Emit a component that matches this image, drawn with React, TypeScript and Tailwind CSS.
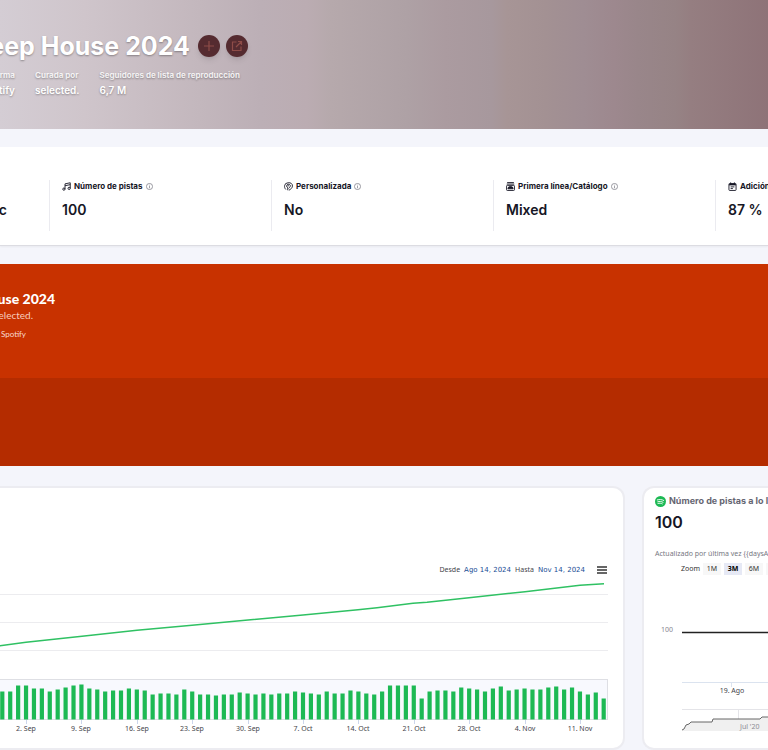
import type { ReactNode } from "react";

const BARS = [
  28, 28, 34, 34, 31, 31, 28, 30, 32, 34, 35, 31, 30, 28, 29, 29, 31, 30, 29, 25, 26, 26, 25, 30,
  28, 25, 25, 24, 25, 25, 27, 26, 25, 26, 25, 26, 26, 28, 27, 26, 25, 28, 26, 26, 29, 28, 26, 25,
  28, 34, 34, 34, 34, 21, 28, 29, 29, 28, 32, 31, 30, 28, 31, 33, 29, 30, 31, 30, 30, 32, 33, 30,
  32, 28, 25, 27, 21,
];

const LINE =
  "M-8 78.700L0 77.700L26 74.300L82 68.300L137 62.300L192 57.300L248 52L303 47L358 41.700L377 39.700L413 35.300L427 34.300L469 29.700L525 23.700L580 17.300L604 15.700";

const TICKS = [
  { x: 26, label: "2. Sep" },
  { x: 81, label: "9. Sep" },
  { x: 137, label: "16. Sep" },
  { x: 192, label: "23. Sep" },
  { x: 248, label: "30. Sep" },
  { x: 303, label: "7. Oct" },
  { x: 358, label: "14. Oct" },
  { x: 414, label: "21. Oct" },
  { x: 469, label: "28. Oct" },
  { x: 525, label: "4. Nov" },
  { x: 580, label: "11. Nov" },
];

function PlusIcon() {
  return (
    <svg viewBox="0 0 24 24" className="size-4" fill="none" stroke="currentColor" strokeWidth="1.8">
      <path d="M12 4.500v15M4.500 12h15" />
    </svg>
  );
}

function OpenIcon() {
  return (
    <svg viewBox="0 0 24 24" className="size-3" fill="none" stroke="currentColor" strokeWidth="2.4">
      <path d="M11 4H3v17h17v-8M14 3h7v7M21 3L10 14" />
    </svg>
  );
}

function InfoIcon() {
  return (
    <svg viewBox="0 0 24 24" className="size-[7px] text-[#74747e]" fill="none" stroke="currentColor" strokeWidth="2.4">
      <circle cx="12" cy="12" r="10.5" />
      <path d="M12 10.5V18M12 6v2.5" />
    </svg>
  );
}

function NotesIcon() {
  return (
    <svg viewBox="0 0 24 24" className="size-[9px]" fill="none" stroke="currentColor" strokeWidth="2.4">
      <path d="M8 19V5l14-3v15M8 10l14-3" />
      <circle cx="5" cy="19" r="3" />
      <circle cx="19" cy="17" r="3" />
    </svg>
  );
}

function HeadIcon() {
  return (
    <svg viewBox="0 0 24 24" className="size-[9px]" fill="none" stroke="currentColor" strokeWidth="2.4">
      <path d="M5 20C2 17 1 13 1.500 10A10 9 0 0 1 11 2c7-1 12 3 11.500 9-.5 5-4 8-9.500 11" />
      <path d="M10 22v-7M10 15c-4-1-4-8 1-9 5 0 7 3 5.500 6-1 2-3 4-4 5M10 10h3" />
    </svg>
  );
}

function CatalogIcon() {
  return (
    <svg viewBox="0 0 24 24" className="size-[9px]" fill="none" stroke="currentColor" strokeWidth="2.4">
      <path d="M3 1.500h18M2 5.500h20" />
      <rect x="1.5" y="9" width="21" height="13.5" rx="2" />
      <path d="M5 18a7 6 0 0 1 14 0z" fill="currentColor" />
    </svg>
  );
}

function CalendarIcon() {
  return (
    <svg viewBox="0 0 24 24" className="size-[9px]" fill="none" stroke="currentColor" strokeWidth="2.4">
      <rect x="2.5" y="4" width="19" height="18.5" rx="2" />
      <path d="M3 7h18" strokeWidth="4" />
      <path d="M7 1v4M17 1v4M7 13h10M7 17.500h6" />
    </svg>
  );
}

function SpotifyIcon() {
  return (
    <svg viewBox="0 0 24 24" className="size-[11px] shrink-0">
      <circle cx="12" cy="12" r="12" fill="#1db954" />
      <path
        d="M5 8.5c5-1.5 10-1 14 1.2M6 12.5c4-1.2 8-.8 11.500 1.200M6.500 16.200c3.500-1 6.500-.6 9.500 1"
        fill="none"
        stroke="#fff"
        strokeWidth="2"
        strokeLinecap="round"
      />
    </svg>
  );
}

function Meta({ label, value }: { label: string; value: string }) {
  return (
    <div>
      <dt className="text-[8px] leading-3 font-bold text-white/85">{label}</dt>
      <dd className="mt-[3px] text-[10px] leading-3 font-semibold">{value}</dd>
    </div>
  );
}

function Stat({ icon, label, value }: { icon: ReactNode; label: string; value: string }) {
  return (
    <div className="w-[222px] shrink-0 border-l border-[#ebebf0] pl-3">
      <div className="flex h-3 items-center gap-[3px] text-[8px] font-bold whitespace-nowrap">
        {icon}
        {label}
        <InfoIcon />
      </div>
      <div className="mt-[6px] text-[14px] leading-6 font-semibold">{value}</div>
    </div>
  );
}

function FollowersChart() {
  return (
    <svg viewBox="0 0 608 168" className="block h-[168px] w-[608px]" role="img" aria-label="Seguidores">
      <path d="M0 26.500H608M0 54.500H608M0 82.500H608" stroke="#ececef" />
      <rect x="-4" y="111.500" width="611.500" height="40" fill="#f8f9fe" stroke="#dedfe4" />
      {BARS.map((h, i) => (
        <rect key={i} x={0.2 + i * 7.913} y={151.5 - h} width="4.200" height={h} fill="#1db954" />
      ))}
      <path d={LINE} fill="none" stroke="#2fc163" strokeWidth="1.400" />
      {TICKS.map((t) => (
        <g key={t.label}>
          <path d={`M${t.x}.5 152v4`} stroke="#ccd6eb" />
          <text x={t.x} y="163" textAnchor="middle" fontSize="7" fill="#44444a">
            {t.label}
          </text>
        </g>
      ))}
    </svg>
  );
}

function TracksChart() {
  return (
    <svg viewBox="0 0 114 150" className="block h-[150px] w-[114px]" role="img" aria-label="Número de pistas">
      <text x="6" y="48" fontSize="7" fill="#85858e">100</text>
      <path d="M27 48.500H114" stroke="#222" strokeWidth="1.300" />
      <path d="M27 98.500H114M76.500 98v5" stroke="#dbe3ef" />
      <text x="77" y="109" textAnchor="middle" fontSize="7" fill="#44444a">19. Ago</text>
      <path d="M27 125.500H114M83.500 125v22" stroke="#e4e4e8" />
      <path d="M27 146L29 145L31 141L34 140L36 138H57L58 135H105L107 133H114V147H27Z" fill="#f0f0f0" />
      <path d="M27 146L29 145L31 141L34 140L36 138H57L58 135H105L107 133H114" fill="none" stroke="#666" />
      <text x="85" y="145" fontSize="7" fill="#8c8c94">Jul '20</text>
    </svg>
  );
}

export default function App() {
  return (
    <div className="min-h-screen overflow-hidden bg-[#f4f5fb] font-['Inter',sans-serif] text-[#161625]">
      <header className="h-[129px] bg-[linear-gradient(to_right,#d4cdd4_0%,#cfc5cb_11%,#c3b7bd_26%,#bcafb6_34%,#bbacb2_40%,#b6a9ac_43%,#aea1a5_53%,#ab9ba0_58%,#a7989d_64%,#a79596_66%,#a39193_71%,#9f8d93_76%,#9d888e_80%,#99868a_83%,#968385_88%,#957e81_90%,#8e7378_100%)] pt-8 text-white [text-shadow:0_1px_2px_#0005]">
        <div className="flex w-[248px] items-center justify-end gap-[6px]">
          <h1 className="mr-[2px] text-[25px] leading-7 font-bold whitespace-nowrap">Deep House 2024</h1>
          <button aria-label="Añadir" className="flex size-[22px] shrink-0 items-center justify-center rounded-full bg-[#552b30] text-[#8e4c48] shadow-md">
            <PlusIcon />
          </button>
          <button aria-label="Abrir" className="flex size-[22px] shrink-0 items-center justify-center rounded-full bg-[#552b30] text-[#8e4c48] shadow-md">
            <OpenIcon />
          </button>
        </div>
        <dl className="mt-[9px] flex gap-5 whitespace-nowrap">
          <div className="flex w-[15px] justify-end text-right">
            <Meta label="Plataforma" value="Spotify" />
          </div>
          <Meta label="Curada por" value="selected." />
          <Meta label="Seguidores de lista de reproducción" value="6,7 M" />
        </dl>
      </header>

      <main>
        <section className="mt-[18px] flex h-[99px] overflow-hidden border-b border-[#dcdce2] bg-white pt-[33px] pb-[14px] shadow-xs">
          <div className="flex w-[49px] shrink-0 justify-end pr-[42px]">
            <div className="mt-[18px] text-[14px] leading-6 font-semibold">Music</div>
          </div>
          <Stat icon={<NotesIcon />} label="Número de pistas" value="100" />
          <Stat icon={<HeadIcon />} label="Personalizada" value="No" />
          <Stat icon={<CatalogIcon />} label="Primera línea/Catálogo" value="Mixed" />
          <Stat icon={<CalendarIcon />} label="Adición" value="87 %" />
        </section>

        <section className="mt-[18px] bg-[#c83200] font-['Lato',sans-serif] text-white">
          <div className="flex h-[114px] flex-col items-start overflow-hidden pt-[27px] whitespace-nowrap">
            <div className="flex w-[55px] justify-end text-[14px] leading-4 font-black">Deep House 2024</div>
            <div className="flex w-[33px] justify-end text-[10px] leading-4 text-[#f7ccbd]">selected.</div>
            <a href="#spotify" className="mt-[3px] flex w-[26px] justify-end text-[8px] leading-4 text-[#f9dcd1]">Guardar en Spotify</a>
          </div>
          <div className="h-[88px] bg-[#b42c00]" />
        </section>

        <div className="mt-5 flex gap-[17px]">
          <section className="h-[264px] min-w-0 flex-1 overflow-hidden rounded-r-xl border-2 border-l-0 border-[#ececf1] bg-white pt-[76px] font-['Noto_Sans',sans-serif]">
            <div className="flex w-[607px] items-center justify-end gap-1 text-[7px] leading-3 text-[#44444a]">
              <span>Desde</span>
              <span className="font-['DejaVu_Sans',sans-serif] text-[#204d96]">Ago 14, 2024</span>
              <span>Hasta</span>
              <span className="font-['DejaVu_Sans',sans-serif] text-[#204d96]">Nov 14, 2024</span>
              <button aria-label="Menú" className="ml-2 flex h-2 w-[10px] flex-col justify-between">
                <span className="h-[2px] w-full bg-[#666]" />
                <span className="h-[2px] w-full bg-[#666]" />
                <span className="h-[2px] w-full bg-[#666]" />
              </button>
            </div>
            <div className="-mt-2">
              <FollowersChart />
            </div>
          </section>

          <section className="h-[264px] w-[126px] shrink-0 overflow-hidden rounded-l-xl border-2 border-r-0 border-[#ececf1] bg-white pt-[7px] pl-[11px] whitespace-nowrap">
            <h2 className="flex items-center gap-[3px] text-[9px] leading-3 font-bold text-[#666672]">
              <SpotifyIcon />
              Número de pistas a lo largo
            </h2>
            <div className="mt-[5px] text-[16px] leading-5 font-semibold">100</div>
            <div className="font-['Noto_Sans',sans-serif]">
              <p className="mt-4 text-[7px] leading-3 text-[#777781]">{"Actualizado por última vez {{daysAgo}}"}</p>
              <div className="mt-[3px] flex items-center gap-[3px] pl-[26px] text-[7px] leading-3 text-[#333]">
                <span>Zoom</span>
                <button className="w-[18px] shrink-0 bg-[#f7f7f7]">1M</button>
                <button className="w-[18px] shrink-0 bg-[#e6e9f5] font-bold text-black">3M</button>
                <button className="w-[18px] shrink-0 bg-[#f7f7f7]">6M</button>
                <button className="w-[18px] shrink-0 bg-[#f7f7f7]">1A</button>
              </div>
              <div className="mt-[9px]">
                <TracksChart />
              </div>
            </div>
          </section>
        </div>
      </main>
    </div>
  );
}
